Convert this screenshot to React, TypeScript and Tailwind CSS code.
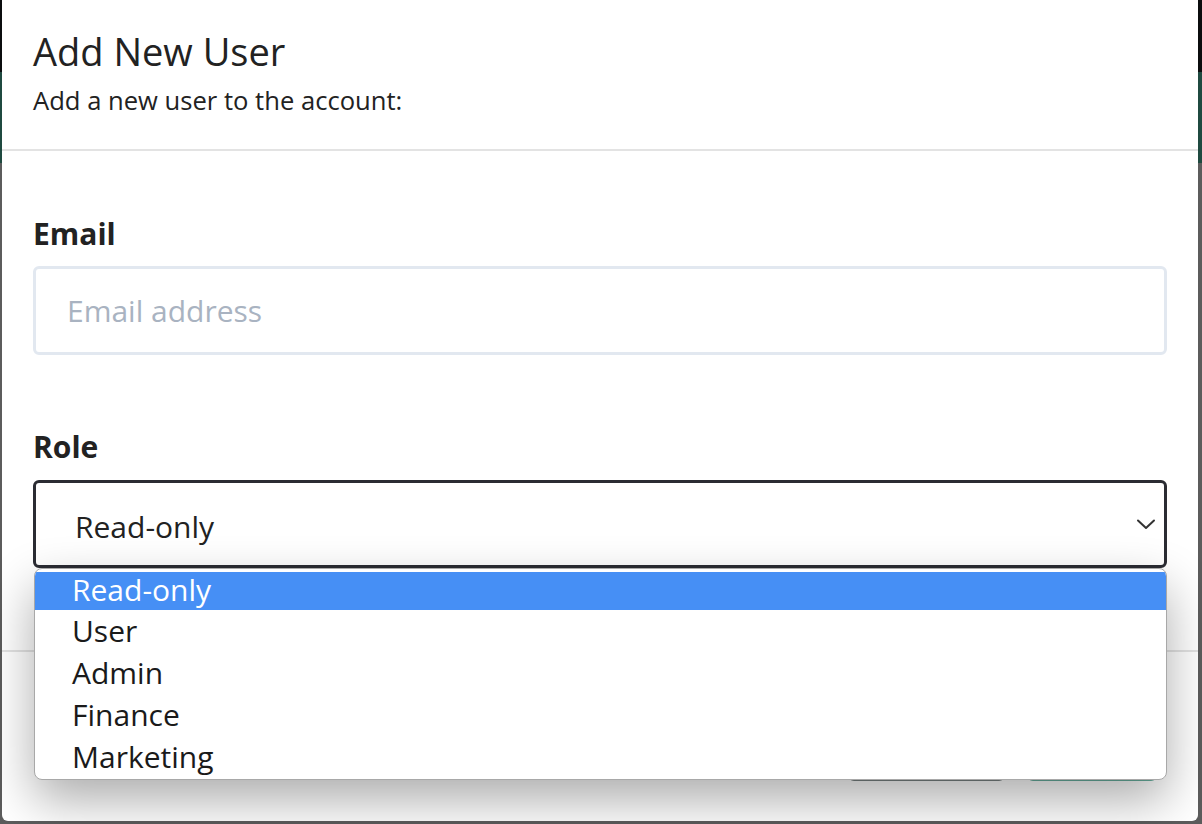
const roles = ["Read-only", "User", "Admin", "Finance", "Marketing"];

export default function App() {
  const selected = "Read-only";

  return (
    <div
      className="relative h-[824px] w-full overflow-hidden bg-[#5c5c5c]"
      style={{ fontFamily: '"Open Sans", "Noto Sans", sans-serif' }}
    >
      {/* page behind the modal */}
      <div className="flex flex-col">
        <div className="h-[72px] bg-[#0b0d0e]" />
        <div className="h-[91px] bg-[#1f4a40]" />
      </div>

      {/* modal */}
      <div className="absolute left-[2px] right-[4px] top-0 bottom-[3px] flex flex-col rounded-b-[6px] bg-white">
        {/* header */}
        <div className="h-[151px] border-b-2 border-[#e3e3e3] px-[31px] pt-[29px]">
          <h1 className="text-[38px] leading-[44px] font-normal text-[#222]">
            Add New User
          </h1>
          <p className="mt-[13px] text-[25.6px] leading-[30px] text-[#222]">
            Add a new user to the account:
          </p>
        </div>

        {/* body */}
        <div className="flex h-[499px] flex-col px-[31px] pt-[65px]">
          <label className="text-[30px] font-bold leading-[36px] text-[#222]">
            Email
          </label>
          <input
            className="mt-[14px] h-[89px] w-full rounded-[6px] border-[3px] border-[#e2e8f0] px-[31px] text-[30px] text-[#222] outline-none placeholder:text-[#a9b3c1]"
            placeholder="Email address"
          />

          <label className="mt-[74px] text-[30px] font-bold leading-[36px] text-[#222]">
            Role
          </label>
          <div className="relative mt-[15px]">
            <div className="flex h-[88px] w-full items-center justify-between rounded-[6px] border-[3px] border-[#2b2c33] pl-[39px] pr-[8px] text-[30px] text-[#222]">
              <span className="mt-[4px]">{selected}</span>
              <svg
                width="20"
                height="12"
                viewBox="0 0 20 12"
                fill="none"
                stroke="#333"
                strokeWidth="2"
                strokeLinecap="round"
                strokeLinejoin="round"
              >
                <polyline points="2,2.5 10,10 18,2.5" />
              </svg>
            </div>

            {/* open dropdown list */}
            <div className="absolute left-[1px] right-0 top-[88px] z-10 overflow-hidden rounded-[8px] border border-[#a8a8a8] bg-white pb-[1px] shadow-[0_20px_50px_rgba(0,0,0,0.33)]">
              {roles.map((role) => (
                <div
                  key={role}
                  className={
                    role === selected
                      ? "mt-[3px] h-[38px] bg-[#468ff5] pl-[37px] text-[30px] leading-[35px] text-white"
                      : "h-[42px] pl-[37px] text-[30px] leading-[41px] text-[#1a1a1a]"
                  }
                >
                  {role}
                </div>
              ))}
            </div>
          </div>
        </div>

        {/* footer */}
        <div className="flex flex-1 items-end justify-end gap-[22px] border-t-2 border-[#e3e3e3] px-[41px] pb-[40px]">
          <button className="h-[46px] w-[157px] rounded-[6px] bg-[#7a8483] text-[20px] text-white">
            Cancel
          </button>
          <button className="h-[46px] w-[130px] rounded-[6px] bg-[#68b09f] text-[20px] text-white">
            Add User
          </button>
        </div>
      </div>
    </div>
  );
}
